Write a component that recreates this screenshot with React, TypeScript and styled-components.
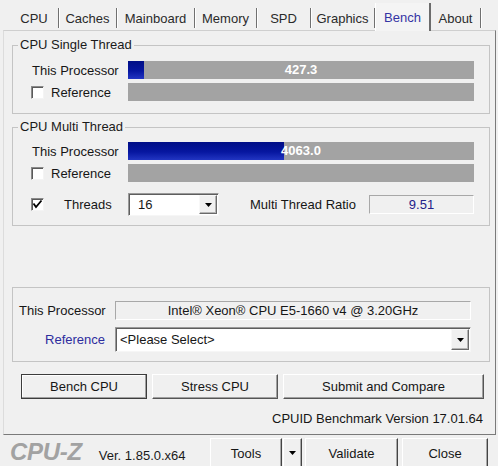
import {createGlobalStyle, styled, css} from 'styled-components';

const SCALE = 9000;

const tabs = [
  {name: 'CPU', width: 49},
  {name: 'Caches', width: 58},
  {name: 'Mainboard', width: 78},
  {name: 'Memory', width: 62},
  {name: 'SPD', width: 54},
  {name: 'Graphics', width: 64},
  {name: 'Bench', width: 56, active: true},
  {name: 'About', width: 50},
];

const GlobalStyle = createGlobalStyle`
  html, body {
    margin: 0;
    padding: 0;
    background: #f0f0f0;
  }
  body {
    font-family: "Liberation Sans", Arial, sans-serif;
    font-size: 13px;
    color: #161616;
  }
`;

const Window = styled.div`
  width: 498px;
  height: 466px;
  overflow: hidden;
  display: flex;
  flex-direction: column;
  background: #f0f0f0;
`;

const TabStrip = styled.div`
  display: flex;
  height: 25px;
  margin-top: 5px;
  padding-left: 10px;
  position: relative;
  z-index: 1;
`;

const Tab = styled.div<{$width: number; $active?: boolean}>`
  box-sizing: border-box;
  width: ${({$width}) => $width}px;
  display: flex;
  align-items: center;
  justify-content: center;
  color: #2a2a2a;
  ${({$active}) =>
    $active
      ? css`
          margin-top: -2px;
          margin-bottom: -1px;
          background: #f4f4f4;
          border-left: 1px solid #ffffff;
          border-right: 2px solid #6c6c6c;
          color: #3434a4;
        `
      : css`
          height: 20px;
          margin-top: 3px;
          border-right: 1px solid #707070;
          box-shadow: 1px 0 0 #ffffff;
        `}
`;

const Panel = styled.div`
  box-sizing: border-box;
  margin-left: 3px;
  width: 493px;
  height: 405px;
  border: 1px solid;
  border-color: #cfcfcf #7a7a7a #7a7a7a #dcdcdc;
  display: flex;
  flex-direction: column;
`;

const Group = styled.fieldset<{$mt: number}>`
  box-sizing: border-box;
  width: 478px;
  margin: ${({$mt}) => $mt}px 0 0 8px;
  padding: 0;
  border: 1px solid #c4c4c4;
  min-inline-size: 0;
`;

const GroupTitle = styled.legend`
  margin-left: 5px;
  padding: 0 2px;
  line-height: 16px;
  font-size: 13px;
  color: #1a1a1a;
`;

const GroupBody = styled.div<{$pad: string}>`
  display: grid;
  grid-template-columns: 96px 1fr;
  row-gap: 4px;
  align-items: center;
  padding: ${({$pad}) => $pad};
`;

const Label = styled.div`
  display: flex;
  align-items: center;
  height: 18px;
  white-space: nowrap;
`;

const Bar = styled.div`
  display: grid;
  height: 18px;
  background: #a3a3a3;
`;

const BarFill = styled.div`
  grid-area: 1 / 1;
  justify-self: start;
  height: 100%;
  background: linear-gradient(to bottom, #000e86 0%, #0616a0 55%, #2235c2 100%);
`;

const BarValue = styled.div`
  grid-area: 1 / 1;
  justify-self: center;
  align-self: center;
  color: #ffffff;
  font-weight: bold;
  line-height: 16px;
`;

const CheckBox = styled.span<{$gap: number}>`
  box-sizing: border-box;
  display: inline-flex;
  align-items: center;
  justify-content: center;
  width: 13px;
  height: 13px;
  margin-left: -1px;
  margin-right: ${({$gap}) => $gap}px;
  background: #ffffff;
  border: 1px solid;
  border-color: #8a8a8a #f4f4f4 #f4f4f4 #8a8a8a;
  box-shadow: inset 1px 1px 0 #5a5a5a;
`;

const ThreadsRow = styled.div`
  display: flex;
  align-items: center;
  margin-top: 7px;
`;

const Select = styled.div<{$width?: number; $height: number; $pad: number}>`
  box-sizing: border-box;
  display: flex;
  align-items: center;
  width: ${({$width}) => ($width ? `${$width}px` : '100%')};
  height: ${({$height}) => $height}px;
  padding: 1px 1px 1px ${({$pad}) => $pad}px;
  background: #ffffff;
  border: 1px solid;
  border-color: #9a9a9a #f6f6f6 #f6f6f6 #9a9a9a;
  box-shadow: inset 1px 1px 0 #5e5e5e;
`;

const SelectText = styled.span`
  flex: 1;
  white-space: nowrap;
`;

const DropButton = styled.span`
  box-sizing: border-box;
  display: flex;
  align-items: center;
  justify-content: center;
  width: 18px;
  height: 100%;
  background: #f0f0f0;
  border: 1px solid;
  border-color: #f8f8f8 #6a6a6a #6a6a6a #f8f8f8;
  box-shadow: inset -1px -1px 0 #b4b4b4;
`;

const RatioLabel = styled.span`
  margin-left: 31px;
  white-space: nowrap;
`;

const ReadBox = styled.div<{$width?: number; $color?: string}>`
  box-sizing: border-box;
  width: ${({$width}) => ($width ? `${$width}px` : '100%')};
  height: 19px;
  margin-left: auto;
  line-height: 17px;
  text-align: center;
  background: #f0f0f0;
  color: ${({$color}) => $color || '#161616'};
  border: 1px solid;
  border-color: #a8a8a8 #ffffff #ffffff #a8a8a8;
  white-space: nowrap;
`;

const InfoGroup = styled.div`
  box-sizing: border-box;
  width: 478px;
  margin: 61px 0 0 8px;
  padding: 13px 18px 9px 6px;
  border: 1px solid #c4c4c4;
  display: grid;
  grid-template-columns: 96px 1fr;
  row-gap: 7px;
  align-items: center;
`;

const InfoLabel = styled.div<{$link?: boolean}>`
  text-align: right;
  padding-right: 10px;
  white-space: nowrap;
  color: ${({$link}) => ($link ? '#2d2d9e' : '#161616')};
`;

const ActionRow = styled.div`
  display: flex;
  gap: 5px;
  margin-top: 12px;
  padding-left: 17px;
`;

const ActionButton = styled.button<{$width: number; $default?: boolean}>`
  box-sizing: border-box;
  width: ${({$width}) => $width}px;
  height: 25px;
  padding: 0;
  font: inherit;
  color: #161616;
  background: #f0f0f0;
  border: 1px solid;
  border-color: ${({$default}) =>
    $default ? '#3c3c3c' : '#ffffff #555555 #555555 #ffffff'};
  box-shadow: inset -1px -1px 0 #a0a0a0,
    inset 1px 1px 0 ${({$default}) => ($default ? '#ffffff' : '#f0f0f0')};
`;

const VersionLine = styled.div`
  margin-top: 12px;
  padding-right: 12px;
  line-height: 16px;
  text-align: right;
`;

const Footer = styled.div`
  display: flex;
  align-items: flex-start;
  height: 31px;
`;

const Brand = styled.div`
  display: flex;
  align-items: baseline;
  width: 200px;
  margin-top: 3px;
  padding-left: 10px;
`;

const Logo = styled.span`
  font-size: 24px;
  line-height: 28px;
  font-weight: bold;
  font-style: italic;
  color: #a2a2a2;
  letter-spacing: -0.3px;
`;

const VersionText = styled.span`
  margin-left: 17px;
  color: #1a1a1a;
`;

const FooterButton = styled.button<{$width: number; $gap?: number}>`
  box-sizing: border-box;
  display: flex;
  align-items: center;
  justify-content: center;
  width: ${({$width}) => $width}px;
  height: 30px;
  margin: 3px 0 0 ${({$gap}) => $gap || 0}px;
  padding: 0 0 1px;
  font: inherit;
  color: #161616;
  background: #f0f0f0;
  border: none;
  border-top: 1px solid #ffffff;
  border-left: 1px solid #ffffff;
  border-right: 1px solid #444444;
  box-shadow: inset -1px 0 0 #a8a8a8;
`;

function Arrow() {
  return (
    <svg width="7" height="4" viewBox="0 0 7 4">
      <path d="M0 0h7L3.5 4z" fill="#000" />
    </svg>
  );
}

function Check() {
  return (
    <svg width="11" height="11" viewBox="0 0 11 11">
      <path d="M1.5 4.5 L4 8 L9.5 1.5" stroke="#000" strokeWidth="1.8" fill="none" />
    </svg>
  );
}

function ScoreBar({value}: {value?: number}) {
  return (
    <Bar>
      {value !== undefined && (
        <>
          <BarFill style={{width: `${(value / SCALE) * 100}%`}} />
          <BarValue>{value.toFixed(1)}</BarValue>
        </>
      )}
    </Bar>
  );
}

export default function App() {
  return (
    <>
      <GlobalStyle />
      <Window>
        <TabStrip>
          {tabs.map((t) => (
            <Tab key={t.name} $width={t.width} $active={t.active}>
              {t.name}
            </Tab>
          ))}
        </TabStrip>
        <Panel>
          <Group $mt={6}>
            <GroupTitle>CPU Single Thread</GroupTitle>
            <GroupBody $pad="8px 15px 12px 19px">
              <Label>This Processor</Label>
              <ScoreBar value={427.3} />
              <Label>
                <CheckBox $gap={7} />
                Reference
              </Label>
              <ScoreBar />
            </GroupBody>
          </Group>

          <Group $mt={5}>
            <GroupTitle>CPU Multi Thread</GroupTitle>
            <GroupBody $pad="7px 15px 9px 19px">
              <Label>This Processor</Label>
              <ScoreBar value={4063.0} />
              <Label>
                <CheckBox $gap={7} />
                Reference
              </Label>
              <ScoreBar />
              <ThreadsRow>
                <CheckBox $gap={20}>
                  <Check />
                </CheckBox>
                Threads
              </ThreadsRow>
              <ThreadsRow>
                <Select $width={91} $height={23} $pad={9}>
                  <SelectText>16</SelectText>
                  <DropButton>
                    <Arrow />
                  </DropButton>
                </Select>
                <RatioLabel>Multi Thread Ratio</RatioLabel>
                <ReadBox $width={105} $color="#22228a">
                  9.51
                </ReadBox>
              </ThreadsRow>
            </GroupBody>
          </Group>

          <InfoGroup>
            <InfoLabel>This Processor</InfoLabel>
            <ReadBox>Intel® Xeon® CPU E5-1660 v4 @ 3.20GHz</ReadBox>
            <InfoLabel $link>Reference</InfoLabel>
            <Select $height={25} $pad={4}>
              <SelectText>&lt;Please Select&gt;</SelectText>
              <DropButton>
                <Arrow />
              </DropButton>
            </Select>
          </InfoGroup>

          <ActionRow>
            <ActionButton $width={126} $default>
              Bench CPU
            </ActionButton>
            <ActionButton $width={126}>Stress CPU</ActionButton>
            <ActionButton $width={201}>Submit and Compare</ActionButton>
          </ActionRow>

          <VersionLine>CPUID Benchmark Version 17.01.64</VersionLine>
        </Panel>

        <Footer>
          <Brand>
            <Logo>CPU-Z</Logo>
            <VersionText>Ver. 1.85.0.x64</VersionText>
          </Brand>
          <FooterButton $width={72}>Tools</FooterButton>
          <FooterButton $width={19} $gap={1}>
            <Arrow />
          </FooterButton>
          <FooterButton $width={93} $gap={3}>
            Validate
          </FooterButton>
          <FooterButton $width={86} $gap={4}>
            Close
          </FooterButton>
        </Footer>
      </Window>
    </>
  );
}
